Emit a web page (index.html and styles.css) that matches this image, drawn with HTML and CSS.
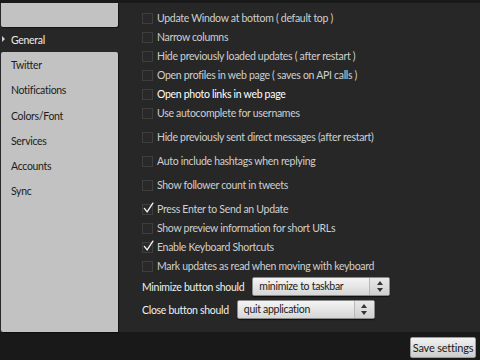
FILE: index.html
```html
<!DOCTYPE html>
<html>
<head>
<meta charset="utf-8">
<link rel="stylesheet" href="styles.css">
</head>
<body>
<div class="window">
  <div class="main">
    <nav class="sidebar">
      <div class="side-top"></div>
      <div class="side-active"><span class="arrow"></span>General</div>
      <ul class="side-list">
        <li>Twitter</li>
        <li>Notifications</li>
        <li>Colors/Font</li>
        <li>Services</li>
        <li>Accounts</li>
        <li>Sync</li>
      </ul>
    </nav>
    <section class="content">
      <div class="row"><span class="box"></span><span>Update Window at bottom ( default top )</span></div>
      <div class="row"><span class="box"></span><span>Narrow columns</span></div>
      <div class="row"><span class="box"></span><span>Hide previously loaded updates ( after restart )</span></div>
      <div class="row"><span class="box"></span><span>Open profiles in web page ( saves on API calls )</span></div>
      <div class="row bright"><span class="box"></span><span>Open photo links in web page</span></div>
      <div class="row"><span class="box"></span><span>Use autocomplete for usernames</span></div>
      <div class="row spaced"><span class="box"></span><span>Hide previously sent direct messages (after restart)</span></div>
      <div class="row spaced"><span class="box"></span><span>Auto include hashtags when replying</span></div>
      <div class="row spaced"><span class="box"></span><span>Show follower count in tweets</span></div>
      <div class="row spaced"><span class="box checked"><svg class="tick" viewBox="0 0 12 12" width="11" height="11"><path d="M1.5 7 L4.5 10.8 L10.8 1.2" fill="none" stroke="#f0f0f0" stroke-width="1.5" stroke-linecap="round" stroke-linejoin="round"/></svg></span><span>Press Enter to Send an Update</span></div>
      <div class="row"><span class="box"></span><span>Show preview information for short URLs</span></div>
      <div class="row"><span class="box checked"><svg class="tick" viewBox="0 0 12 12" width="11" height="11"><path d="M1.5 7 L4.5 10.8 L10.8 1.2" fill="none" stroke="#f0f0f0" stroke-width="1.5" stroke-linecap="round" stroke-linejoin="round"/></svg></span><span>Enable Keyboard Shortcuts</span></div>
      <div class="row"><span class="box"></span><span>Mark updates as read when moving with keyboard</span></div>
      <div class="select-row first">
        <span class="label">Minimize button should</span>
        <div class="select"><span class="value">minimize to taskbar</span><span class="spin"><i class="up"></i><i class="down"></i></span></div>
      </div>
      <div class="select-row">
        <span class="label">Close button should</span>
        <div class="select"><span class="value">quit application</span><span class="spin"><i class="up"></i><i class="down"></i></span></div>
      </div>
    </section>
  </div>
  <footer class="bottom">
    <button class="save">Save settings</button>
  </footer>
</div>
</body>
</html>
```

FILE: styles.css
```css
* { box-sizing: border-box; }
html, body { margin: 0; padding: 0; }
body {
  width: 480px;
  height: 360px;
  overflow: hidden;
  background: #191919;
  font-family: "Lato", "Open Sans", sans-serif;
  font-size: 10.5px;
  letter-spacing: -0.3px;
}
.window {
  display: flex;
  flex-direction: column;
  height: 360px;
  padding-top: 3px;
}
.main {
  display: flex;
  height: 329px;
  background: #272727;
}
.sidebar {
  width: 119px;
  padding-left: 1px;
  display: flex;
  flex-direction: column;
}
.side-top {
  height: 24px;
  background: #c2c2c2;
  border-radius: 0 0 2px 2px;
  box-shadow: 1px 1px 1px rgba(0,0,0,0.5);
  margin-right: 1px;
}
.side-active {
  height: 25px;
  display: flex;
  align-items: center;
  color: #ececec;
  padding-left: 10px;
  position: relative;
}
.arrow {
  position: absolute;
  left: 1px;
  top: 9px;
  width: 0;
  height: 0;
  border-left: 3px solid #d0d0d0;
  border-top: 3px solid transparent;
  border-bottom: 3px solid transparent;
}
.side-list {
  list-style: none;
  margin: 0 1px 0 0;
  padding: 1px 0 0 0;
  flex: 1;
  background: #c2c2c2;
  border-radius: 2px 2px 0 2px;
  box-shadow: 1px 1px 1px rgba(0,0,0,0.5);
}
.side-list li {
  height: 25.3px;
  line-height: 25.3px;
  padding-left: 10px;
  color: #1c1c1c;
}
.content {
  flex: 1;
  padding: 5px 0 0 23px;
  color: #cfcfcf;
}
.row {
  height: 19px;
  display: flex;
  align-items: center;
  white-space: nowrap;
}
.row.spaced { margin-top: 5px; }
.row.bright { color: #ffffff; }
.box {
  width: 11px;
  height: 11px;
  margin-right: 4px;
  margin-top: 2px;
  border: 1px solid #3e3e3e;
  background: #292929;
  flex: none;
  position: relative;
}
.tick {
  position: absolute;
  left: 0;
  top: -3px;
}
.select-row {
  display: flex;
  align-items: center;
  height: 19px;
  margin-top: 4px;
  color: #f0f0f0;
  white-space: nowrap;
}
.select-row.first { margin-top: 2px; }
.label { margin-right: 8px; }
.select {
  width: 138px;
  height: 19px;
  display: flex;
  background: linear-gradient(#f4f4f4, #d6d6d6);
  border: 1px solid #8a8a8a;
  border-radius: 2px;
  box-shadow: 0 1px 1px rgba(0,0,0,0.6);
  color: #1a1a1a;
}
.value {
  flex: 1;
  padding-left: 6px;
  line-height: 17px;
}
.spin {
  width: 20px;
  border-left: 1px solid #b8b8b8;
  background: linear-gradient(#e8e8e8, #cfcfcf);
  display: flex;
  flex-direction: column;
  align-items: center;
  justify-content: center;
  gap: 3px;
}
.spin i {
  display: block;
  width: 0;
  height: 0;
  border-left: 3px solid transparent;
  border-right: 3px solid transparent;
}
.spin .up { border-bottom: 4px solid #333; }
.spin .down { border-top: 4px solid #333; }
.bottom {
  flex: 1;
  display: flex;
  justify-content: flex-end;
  align-items: flex-start;
  padding: 5px 4px 0 0;
}
.save {
  height: 21px;
  width: 66px;
  padding: 0;
  font-family: inherit;
  font-size: 11px;
  letter-spacing: -0.2px;
  color: #1a1a1a;
  background: linear-gradient(#f2f2f2, #cdcdcd);
  border: 1px solid #9a9a9a;
  border-radius: 2px;
}
```
